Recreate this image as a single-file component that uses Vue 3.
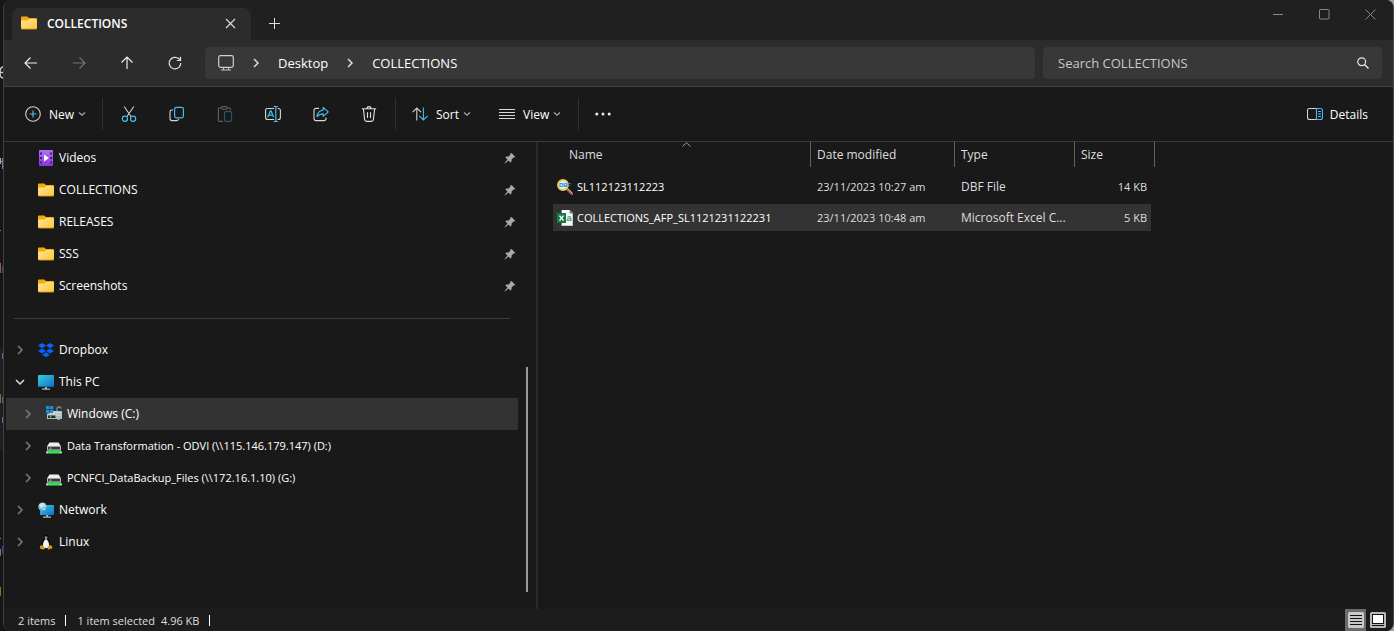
<script setup>
import { ref } from 'vue'

const search = ref('')

const pinned = [
  { name: 'Videos', icon: 'i-videos' },
  { name: 'COLLECTIONS', icon: 'i-folder' },
  { name: 'RELEASES', icon: 'i-folder' },
  { name: 'SSS', icon: 'i-folder' },
  { name: 'Screenshots', icon: 'i-folder' }
]

const places = [
  { name: 'Dropbox', icon: 'i-dropbox' },
  { name: 'This PC', icon: 'i-pc', open: true },
  { name: 'Windows (C:)', icon: 'i-windrive', child: true, selected: true },
  { name: 'Data Transformation - ODVI (\\\\115.146.179.147) (D:)', icon: 'i-netdrive', child: true, remote: true },
  { name: 'PCNFCI_DataBackup_Files (\\\\172.16.1.10) (G:)', icon: 'i-netdrive', child: true, remote: true },
  { name: 'Network', icon: 'i-network' },
  { name: 'Linux', icon: 'i-linux' }
]

const tools = [
  { label: 'Cut', icon: 'i-cut' },
  { label: 'Copy', icon: 'i-copy' },
  { label: 'Paste', icon: 'i-paste', disabled: true },
  { label: 'Rename', icon: 'i-rename' },
  { label: 'Share', icon: 'i-share' },
  { label: 'Delete', icon: 'i-delete' }
]

const columns = [
  { label: 'Name', cls: 'c-name', sorted: true },
  { label: 'Date modified', cls: 'c-date' },
  { label: 'Type', cls: 'c-type' },
  { label: 'Size', cls: 'c-size' }
]

const files = [
  { name: 'SL112123112223', date: '23/11/2023 10:27 am', type: 'DBF File', size: '14 KB', icon: 'i-dbf' },
  { name: 'COLLECTIONS_AFP_SL1121231122231', date: '23/11/2023 10:48 am', type: 'Microsoft Excel C...', size: '5 KB', icon: 'i-excel', selected: true }
]
</script>

<template>
  <div class="desktop">
    <svg class="symbols" aria-hidden="true">
      <defs>
        <linearGradient id="g-folder" x1="0" y1="0" x2="1" y2="1">
          <stop offset="0" stop-color="#ffe79b" /><stop offset="1" stop-color="#fcc535" />
        </linearGradient>
        <linearGradient id="g-video" x1="0" y1="0" x2="0" y2="1">
          <stop offset="0" stop-color="#b272f0" /><stop offset="1" stop-color="#8638d8" />
        </linearGradient>
        <linearGradient id="g-screen" x1="0" y1="0" x2="1" y2="1">
          <stop offset="0" stop-color="#35d0e0" /><stop offset="1" stop-color="#0f6fc4" />
        </linearGradient>
        <radialGradient id="g-globe" cx="0.4" cy="0.3" r="0.8">
          <stop offset="0" stop-color="#d6f1fb" /><stop offset="1" stop-color="#2d8bc0" />
        </radialGradient>

        <symbol id="i-folder" viewBox="0 0 16 16">
          <path d="M0 2.5Q0 1.5 1 1.5H6.2L8 3H15Q16 3 16 4V8H0z" fill="#f6a90c" />
          <path d="M0 5.6H6.4L8.2 4H15Q16 4 16 5V13Q16 14 15 14H1Q0 14 0 13z" fill="url(#g-folder)" />
          <path d="M0 13Q0 14 1 14H15Q16 14 16 13" fill="none" stroke="#e3a21b" stroke-width="0.8" />
        </symbol>
        <symbol id="i-videos" viewBox="0 0 16 16">
          <rect x="1" y="0" width="14" height="16" rx="1" fill="url(#g-video)" />
          <path d="M2 2.5h2v2H2zM2 7h2v2H2zM2 11.5h2v2H2zM12 2.5h2v2h-2zM12 7h2v2h-2zM12 11.5h2v2h-2z" fill="#4a1a82" />
          <path d="M6 4.5v7l5-3.5z" fill="#fff" />
        </symbol>
        <symbol id="i-dropbox" viewBox="0 0 16 16">
          <path d="M4 1l4 2.6-4 2.6-4-2.6zM12 1l4 2.6-4 2.6-4-2.6zM4 6.4L8 9l-4 2.6L0 9zM12 6.4L16 9l-4 2.6L8 9zM8 10.3l4 2.5-4 2.5-4-2.5z" fill="#0a62ff" />
        </symbol>
        <symbol id="i-pc" viewBox="0 0 16 16">
          <rect x="0" y="1" width="16" height="12" rx="0.8" fill="url(#g-screen)" />
          <path d="M0 12.6h16" stroke="#0b5a9a" stroke-width="0.8" />
          <path d="M7 13h2v2H7zM4 14.6h8v1.2H4z" fill="#a8b4bc" />
        </symbol>
        <symbol id="i-windrive" viewBox="0 0 16 16">
          <path d="M3 7.5L5 5H14L16 8V13H1V8z" fill="#dcdcdc" />
          <path d="M1 8.5H16V13H1z" fill="#bdbdbd" />
          <path d="M2 9.5H15V12H2z" fill="#2b2b2b" />
          <circle cx="4.5" cy="10.5" r="0.9" fill="#38d257" />
          <path d="M0 0h3.3v3.3H0zM4 0h3.3v3.3H4zM0 4h3.3v3.3H0zM4 4h3.3v3.3H4z" fill="#1a93dd" />
          <path d="M11 5V3Q11 0.8 13 0.8Q14.8 0.8 15 2.6" fill="none" stroke="#9a9a9a" stroke-width="1.2" />
          <path d="M9.2 5H16V10Q16 12.5 12.6 14Q9.2 12.5 9.2 10z" fill="#a9bccb" />
          <path d="M10 6.5h5.4M10 9h5.4" stroke="#dce6ee" stroke-width="0.8" />
        </symbol>
        <symbol id="i-netdrive" viewBox="0 0 16 16">
          <path d="M3.4 4.6H12.6L15 8.4H1z" fill="#efefef" />
          <path d="M1 8H15V12.4H1z" fill="#b8b8b8" />
          <path d="M2 8.8H14V11.4H2z" fill="#3a3a3a" />
          <circle cx="4.5" cy="10.2" r="0.9" fill="#38e35c" />
          <path d="M1 12.2H15V15.6H1z" fill="#3fd75c" />
          <path d="M0 13.4H2V15.2H0zM14 13.4H16V15.2H14z" fill="#bcd9c1" />
        </symbol>
        <symbol id="i-network" viewBox="0 0 16 16">
          <rect x="2" y="3" width="14" height="10" rx="0.6" fill="url(#g-screen)" />
          <path d="M8.2 13h2v2h-2zM5 14.6h8v1.2H5z" fill="#a8b4bc" />
          <circle cx="4.6" cy="4.8" r="4.4" fill="url(#g-globe)" />
          <path d="M2 2.8Q4 4.6 3.2 6.2M5.4 1.2Q5 3.6 8 4.8M4.6 8.2Q5 6.2 7.6 7" fill="none" stroke="#f4fcff" stroke-width="0.9" />
        </symbol>
        <symbol id="i-linux" viewBox="0 0 16 16">
          <path d="M8 0.3Q5.4 0.3 5.5 3.2Q5.6 5.4 4 7.8Q2.4 10.4 3 13.2H13Q13.6 10.4 12 7.8Q10.4 5.4 10.5 3.2Q10.6 0.3 8 0.3z" fill="#070707" stroke="#333" stroke-width="0.3" />
          <path d="M8 5Q6 6 5.2 9Q4.4 13 6.6 14H9.4Q11.6 13 10.8 9Q10 6 8 5z" fill="#f4f4f4" />
          <path d="M6.8 2.6h0.9v1.3h-0.9zM8.4 2.6h0.9v1.3h-0.9z" fill="#ddd" />
          <path d="M6.5 4.4Q8 3.4 9.5 4.4L8 5.6z" fill="#e7a521" />
          <path d="M2 12.2L4 10.8L7 14.2Q6.2 15.8 4.8 15.4L1.8 14.6zM14 12.2L12 10.8L9.4 13.6Q9.4 15.8 11 15.4L14.4 14.2z" fill="#d49a1c" />
        </symbol>
        <symbol id="i-dbf" viewBox="0 0 16 16">
          <path d="M9.8 9.8L14.8 14.8" stroke="#9a5a4b" stroke-width="2.8" stroke-linecap="round" />
          <path d="M10.8 9.8L15.2 14.2" stroke="#e4c0b4" stroke-width="1" />
          <circle cx="6" cy="6" r="5.1" fill="#d8f0fc" stroke="#eccb4f" stroke-width="1.7" />
          <text x="2" y="8" font-size="6" font-weight="700" font-family="Liberation Sans, sans-serif" fill="#1f7fd0">DBF</text>
        </symbol>
        <symbol id="i-excel" viewBox="0 0 16 16">
          <path d="M4.6 0H12.6L16 3.4V16H4.6z" fill="#f7f7f7" />
          <path d="M12.6 0L16 3.4H12.6z" fill="#7c7c7c" />
          <path d="M4.6 15.6H15.6V3.4" fill="none" stroke="#a0a0a0" stroke-width="0.6" />
          <rect x="0" y="3" width="9" height="10" fill="#137c43" />
          <path d="M2.5 5.6L6.5 10.6M6.5 5.6L2.5 10.6" stroke="#fff" stroke-width="1.4" />
          <text x="9.6" y="10.8" font-size="9" font-weight="700" font-family="Liberation Sans, sans-serif" fill="#2c9f66">a</text>
        </symbol>

        <symbol id="i-pin" viewBox="0 0 12 12">
          <path d="M7.2 0.8L11.2 4.8L10.2 5.6L9.6 5.5L7.6 7.6L7.4 9.8L6.4 10.6L4.4 8.6L1 11.4L0.6 11L3.4 7.6L1.4 5.6L2.3 4.6L4.5 4.4L6.5 2.4L6.4 1.6z" fill="#a3abb2" />
        </symbol>

        <symbol id="i-cut" viewBox="0 0 16 16">
          <path d="M3.2 0.5L10.2 10.8M12.8 0.5L5.8 10.8" fill="none" stroke="#d0d0d0" stroke-width="1.1" />
          <circle cx="3.9" cy="12.7" r="2.6" fill="none" stroke="#4cb8ee" stroke-width="1.2" />
          <circle cx="12.1" cy="12.7" r="2.6" fill="none" stroke="#4cb8ee" stroke-width="1.2" />
        </symbol>
        <symbol id="i-copy" viewBox="0 0 16 16">
          <path d="M4 4H2.8Q1 4 1 5.8V12.6Q1 14.6 3 14.6H7.6Q9.4 14.6 9.6 13" fill="none" stroke="#d6d6d6" stroke-width="1.1" />
          <rect x="5.6" y="1.4" width="8.8" height="10.4" rx="1.8" fill="none" stroke="#4cb8ee" stroke-width="1.2" />
        </symbol>
        <symbol id="i-paste" viewBox="0 0 16 16">
          <path d="M4.5 2H2.4Q1.4 2 1.4 3V14.4Q1.4 15.4 2.4 15.4H6M10 2h2.4Q13.4 2 13.4 3V4.5" fill="none" stroke="#606060" stroke-width="1.1" />
          <rect x="4.6" y="0.6" width="5.6" height="2.6" rx="1.2" fill="none" stroke="#606060" stroke-width="1.1" />
          <rect x="7.6" y="5.6" width="7" height="9.8" rx="1.2" fill="none" stroke="#285670" stroke-width="1.1" />
        </symbol>
        <symbol id="i-rename" viewBox="0 0 16 16">
          <path d="M9.2 2.5H2.6Q0.6 2.5 0.6 4.5V11.5Q0.6 13.5 2.6 13.5H9.2M12.6 2.5H13.4Q15.4 2.5 15.4 4.5V11.5Q15.4 13.5 13.4 13.5H12.6" fill="none" stroke="#d6d6d6" stroke-width="1.1" />
          <path d="M8.6 0.5H13M8.6 15.5H13M10.8 0.5V15.5" fill="none" stroke="#4cb8ee" stroke-width="1.2" />
          <path d="M2.8 11.2L5.4 4.8H6L8.6 11.2M3.6 9.2H7.8" fill="none" stroke="#4cb8ee" stroke-width="1.3" />
        </symbol>
        <symbol id="i-share" viewBox="0 0 16 16">
          <path d="M6 2.4H3.2Q1 2.4 1 4.6V12.4Q1 14.6 3.2 14.6H10.8Q13 14.6 13 12.4V11.4" fill="none" stroke="#d6d6d6" stroke-width="1.1" />
          <path d="M10.2 1.4L15.2 5.9L10.2 10.4V7.8Q6.4 7.6 4 10.6Q4.6 4.8 10.2 4.1z" fill="none" stroke="#4cb8ee" stroke-width="1.2" stroke-linejoin="round" />
        </symbol>
        <symbol id="i-delete" viewBox="0 0 16 16">
          <path d="M0.8 2.8H15.2M5.8 2.6Q6 0.6 8 0.6Q10 0.6 10.2 2.6M2.4 3L3.6 13.4Q3.8 15.4 5.8 15.4H10.2Q12.2 15.4 12.4 13.4L13.6 3M6.5 6.2V12M9.5 6.2V12" fill="none" stroke="#e0e0e0" stroke-width="1.1" />
        </symbol>
        <symbol id="i-chevdown" viewBox="0 0 8 8">
          <path d="M1 2.5L4 5.3L7 2.5" fill="none" stroke="#a8a8a8" stroke-width="1.2" />
        </symbol>
        <symbol id="i-chevright" viewBox="0 0 10 10">
          <path d="M3 1L7 5L3 9" fill="none" stroke="currentColor" stroke-width="1.5" />
        </symbol>
      </defs>
    </svg>

    <svg class="behind" viewBox="0 0 3 631" width="3" height="631" aria-hidden="true">
      <path d="M0 348h3v103H0z" fill="#202020" />
      <path d="M3 67Q0 67 0 72.500T3 78M0 72.500H3" fill="none" stroke="#c8c8c8" stroke-width="1.500" />
      <path d="M0 158h1v6H0zM0 161h2v1H0z" fill="#b9aa98" />
      <path d="M2 158h1v11H2z" fill="#5a8bb8" />
      <path d="M0 230h1v1H0zM0 538h1v1H0z" fill="#b08950" />
      <path d="M0 263h1v10H0zM0 394h1v9H0zM0 587h1v9H0z" fill="#9d651d" />
      <path d="M2 266h1v7H2zM2 546h1v8H2z" fill="#343bd0" />
      <path d="M2 353h1v6H2zM2 397h1v6H2zM2 417h1v6H2z" fill="#3975a7" />
      <path d="M0 549h1v7H0z" fill="#8f713e" />
    </svg>

    <main class="window">
      <header class="titlebar">
        <div class="tab">
          <svg class="ico"><use href="#i-folder" /></svg>
          <span class="tab-title">COLLECTIONS</span>
          <button class="tab-close" aria-label="Close tab">
            <svg width="11" height="11" viewBox="0 0 11 11"><path d="M1 1L10 10M10 1L1 10" stroke="#ddd" stroke-width="1.100" /></svg>
          </button>
        </div>
        <button class="new-tab" aria-label="New tab">
          <svg width="11" height="11" viewBox="0 0 11 11"><path d="M0 5.500H11M5.500 0V11" stroke="#ddd" /></svg>
        </button>
        <div class="caption">
          <button aria-label="Minimize"><svg width="11" height="11" viewBox="0 0 11 11"><path d="M0 5.500H10" stroke="#888" /></svg></button>
          <button aria-label="Maximize"><svg width="11" height="11" viewBox="0 0 11 11"><rect x="0.500" y="0.500" width="9.500" height="9.500" rx="0.800" fill="none" stroke="#888" /></svg></button>
          <button aria-label="Close"><svg width="11" height="11" viewBox="0 0 11 11"><path d="M0.500 0.500L10.500 10.500M10.500 0.500L0.500 10.500" stroke="#888" /></svg></button>
        </div>
      </header>

      <nav class="navbar" aria-label="Navigation">
        <div class="nav-buttons">
          <button aria-label="Back"><svg width="14" height="14" viewBox="0 0 14 14"><path d="M13 7H1.500M6.500 1.500L1 7L6.500 12.500" fill="none" stroke="#eee" stroke-width="1.200" /></svg></button>
          <button aria-label="Forward" disabled><svg width="14" height="14" viewBox="0 0 14 14"><path d="M1 7H12.500M7.500 1.500L13 7L7.500 12.500" fill="none" stroke="#707070" stroke-width="1.200" /></svg></button>
          <button aria-label="Up"><svg width="14" height="14" viewBox="0 0 14 14"><path d="M7 13V1.500M1.500 6.500L7 1L12.500 6.500" fill="none" stroke="#eee" stroke-width="1.200" /></svg></button>
          <button aria-label="Refresh"><svg width="14" height="14" viewBox="0 0 14 14"><path d="M12.800 7A5.800 5.800 0 1 1 10.900 2.800L12.400 4.200M12.500 0.800V4.500H8.800" fill="none" stroke="#e0e0e0" stroke-width="1.200" /></svg></button>
        </div>
        <div class="address">
          <svg class="monitor" width="16" height="16" viewBox="0 0 16 16"><rect x="0.700" y="0.700" width="14.600" height="11.600" rx="1.800" fill="none" stroke="#d0d0d0" stroke-width="1.200" /><path d="M5.500 12.500V15M10.500 12.500V15M3 15H13" fill="none" stroke="#c0c0c0" stroke-width="1.200" /></svg>
          <svg class="crumb-sep"><use href="#i-chevright" /></svg>
          <button class="crumb">Desktop</button>
          <svg class="crumb-sep"><use href="#i-chevright" /></svg>
          <button class="crumb">COLLECTIONS</button>
        </div>
        <label class="search">
          <input v-model="search" type="text" placeholder="Search COLLECTIONS" aria-label="Search COLLECTIONS" />
          <svg width="12" height="12" viewBox="0 0 12 12"><circle cx="4.700" cy="4.700" r="3.900" fill="none" stroke="#e4e4e4" stroke-width="1.200" /><path d="M7.500 7.500L11.500 11.500" stroke="#e4e4e4" stroke-width="1.400" /></svg>
        </label>
      </nav>

      <div class="commands" role="toolbar" aria-label="Commands">
        <button class="cmd new">
          <svg class="ico" viewBox="0 0 16 16"><circle cx="8" cy="8" r="7.300" fill="none" stroke="#d0d0d0" stroke-width="1.100" /><path d="M4.500 8H11.500M8 4.500V11.500" stroke="#4cb8ee" stroke-width="1.200" /></svg>
          <span>New</span>
          <svg class="chev"><use href="#i-chevdown" /></svg>
        </button>
        <div class="tools">
          <button v-for="t in tools" :key="t.label" class="tool" :aria-label="t.label" :disabled="t.disabled">
            <svg class="ico"><use :href="'#' + t.icon" /></svg>
          </button>
        </div>
        <div class="arrange">
          <button class="cmd">
            <svg class="ico" viewBox="0 0 16 16"><path d="M4.800 14.500V2M0.600 6.200L4.800 2L9 6.200" fill="none" stroke="#d0d0d0" stroke-width="1.100" /><path d="M11.400 1.500V14M7.200 9.800L11.400 14L15.600 9.800" fill="none" stroke="#4cb8ee" stroke-width="1.100" /></svg>
            <span>Sort</span>
            <svg class="chev"><use href="#i-chevdown" /></svg>
          </button>
          <button class="cmd">
            <svg class="ico" viewBox="0 0 16 16"><path d="M0 3.500H16M0 6.500H16M0 9.500H16M0 12.500H16" stroke="#d8d8d8" /></svg>
            <span>View</span>
            <svg class="chev"><use href="#i-chevdown" /></svg>
          </button>
        </div>
        <button class="tool" aria-label="See more">
          <svg class="ico" viewBox="0 0 16 16"><circle cx="1.800" cy="8" r="1.500" fill="#eee" /><circle cx="8" cy="8" r="1.500" fill="#eee" /><circle cx="14.200" cy="8" r="1.500" fill="#eee" /></svg>
        </button>
        <button class="cmd details">
          <svg class="ico" viewBox="0 0 16 16"><path d="M9.500 2.500H2.500Q0.500 2.500 0.500 4.500V11.500Q0.500 13.500 2.500 13.500H9.500" fill="none" stroke="#d6d6d6" stroke-width="1.100" /><path d="M9.500 2.500H13.500Q15.500 2.500 15.500 4.500V11.500Q15.500 13.500 13.500 13.500H9.500zM11 5.500H14M11 8H14M11 10.500H14" fill="none" stroke="#4cb8ee" stroke-width="1.100" /></svg>
          <span>Details</span>
        </button>
      </div>

      <div class="body">
        <aside class="sidebar">
          <div class="tree">
            <a v-for="p in pinned" :key="p.name" href="#" class="row">
              <span class="twist"></span>
              <svg class="ico"><use :href="'#' + p.icon" /></svg>
              <span class="label">{{ p.name }}</span>
              <svg class="pin"><use href="#i-pin" /></svg>
            </a>
            <hr class="divider" />
            <a v-for="p in places" :key="p.name" href="#" class="row" :class="{ child: p.child, selected: p.selected, open: p.open, remote: p.remote }">
              <span class="twist"><svg class="arrow"><use href="#i-chevright" /></svg></span>
              <svg class="ico"><use :href="'#' + p.icon" /></svg>
              <span class="label">{{ p.name }}</span>
            </a>
          </div>
          <div class="scroll"><div class="thumb"></div></div>
        </aside>

        <section class="list">
          <table>
            <thead>
              <tr>
                <th v-for="c in columns" :key="c.label" :class="c.cls" :aria-sort="c.sorted ? 'ascending' : undefined">
                  <button class="head">
                    {{ c.label }}
                    <svg v-if="c.sorted" class="caret" width="9" height="5" viewBox="0 0 9 5"><path d="M0.500 4.500L4.500 0.700L8.500 4.500" fill="none" stroke="#a0a0a0" /></svg>
                  </button>
                </th>
              </tr>
            </thead>
            <tbody>
              <tr v-for="f in files" :key="f.name" :class="{ selected: f.selected }">
                <td class="c-name">
                  <div class="file"><svg class="ico"><use :href="'#' + f.icon" /></svg><span>{{ f.name }}</span></div>
                </td>
                <td>{{ f.date }}</td>
                <td class="c-type">{{ f.type }}</td>
                <td class="c-size">{{ f.size }}</td>
              </tr>
            </tbody>
          </table>
        </section>
      </div>

      <footer class="status">
        <span class="count">2 items</span>
        <span class="selection"><span>1 item selected</span><span>4.96 KB</span></span>
        <div class="views">
          <button class="view on" aria-label="Details view">
            <svg width="16" height="16" viewBox="0 0 16 16"><rect width="16" height="16" rx="1.500" fill="#c8c8c8" /><path d="M2 3.500H14M2 6.500H14M2 9.500H14M2 12.500H14" stroke="#111" /></svg>
          </button>
          <button class="view" aria-label="Large icons view">
            <svg width="16" height="16" viewBox="0 0 16 16"><rect width="16" height="16" rx="1.500" fill="#b8b8b8" /><rect x="2.500" y="2.500" width="11" height="9" fill="#fff" stroke="#111" /><path d="M2 13.500H14" stroke="#111" /></svg>
          </button>
        </div>
      </footer>
    </main>
  </div>
</template>

<style>
body {
  background: #161616;
}
</style>

<style scoped>
.desktop {
  display: grid;
  grid-template-columns: 3px minmax(0, 1fr);
  min-height: 100vh;
  background: linear-gradient(90deg, #161616 50%, #a0a0a0 50%);
  font-family: "Open Sans", "Noto Sans", sans-serif;
  font-size: 12px;
  line-height: 16px;
  color: #fff;
}
.symbols {
  position: absolute;
  width: 0;
  height: 0;
}
.behind {
  display: block;
}
.window {
  display: flex;
  flex-direction: column;
  min-width: 0;
  border-left: 1px solid #404040;
  border-right: 1px solid #4a4a4a;
  border-radius: 8px;
  background: #191919;
  overflow: hidden;
}
button {
  display: flex;
  align-items: center;
  justify-content: center;
  padding: 0;
  border: 0;
  background: none;
  color: inherit;
  font: inherit;
}
svg {
  flex: none;
}
.ico {
  width: 16px;
  height: 16px;
}

.titlebar {
  display: flex;
  height: 40px;
  background: #202020;
}
.tab {
  display: flex;
  align-items: center;
  box-sizing: border-box;
  width: 239px;
  margin: 8px 0 0 8px;
  padding: 0 10px 2px 9px;
  border-radius: 8px 8px 0 0;
  background: #2c2c2c;
}
.tab-title {
  flex: 1;
  margin-left: 10px;
  padding-top: 2px;
  font-weight: 600;
}
.tab-close {
  width: 22px;
  height: 24px;
}
.new-tab {
  width: 46px;
  padding-top: 7px;
}
.caption {
  display: flex;
  margin-left: auto;
}
.caption button {
  width: 46px;
  height: 28px;
}

.navbar {
  display: flex;
  align-items: center;
  gap: 8px;
  box-sizing: border-box;
  height: 47px;
  padding-right: 11px;
  border-bottom: 1px solid #404040;
  background: #2c2c2c;
  font-size: 13px;
  line-height: 20px;
}
.nav-buttons {
  display: flex;
  gap: 16px;
  padding: 0 6px 0 11px;
}
.nav-buttons button {
  width: 32px;
  height: 32px;
}
.address,
.search {
  display: flex;
  align-items: center;
  height: 32px;
  border-radius: 4px;
  background: #383838;
}
.address {
  flex: 1;
  min-width: 0;
}
.monitor {
  margin-left: 13px;
}
.crumb-sep {
  width: 10px;
  height: 10px;
  margin: 0 17px;
  color: #ddd;
}
.search {
  width: 339px;
  box-sizing: border-box;
  padding: 0 13px 0 15px;
}
.search input {
  flex: 1;
  min-width: 0;
  padding: 0;
  border: 0;
  outline: 0;
  background: none;
  color: #fff;
  font: inherit;
}
.search input::placeholder {
  color: #c8c8c8;
  opacity: 1;
}

.commands {
  display: flex;
  align-items: center;
  box-sizing: border-box;
  height: 55px;
  padding: 0 25px 0 21px;
  border-bottom: 1px solid #3a3a3a;
}
.cmd {
  height: 32px;
}
.cmd span {
  margin: 0 4px 0 8px;
  padding-top: 2px;
}
.chev {
  width: 8px;
  height: 8px;
}
.new {
  width: 61px;
}
.tools,
.arrange {
  display: flex;
  align-items: center;
  height: 32px;
  border-right: 1px solid #303030;
}
.tools {
  margin-left: 16px;
  padding: 0 2px;
  border-left: 1px solid #303030;
}
.tool {
  width: 48px;
  height: 32px;
}
.arrange {
  gap: 28px;
  padding: 0 17px 0 16px;
}
.details {
  margin-left: auto;
}
.details span {
  margin: 0 0 0 7px;
}

.body {
  display: flex;
  flex: 1;
  min-height: 0;
}
.sidebar {
  display: flex;
  flex: none;
  width: 532px;
  border-right: 2px solid #2a2a2a;
}
.tree {
  flex: 1;
  margin-left: 2px;
}
.row {
  display: flex;
  align-items: center;
  height: 32px;
  color: #fff;
  text-decoration: none;
}
.row.selected {
  background: #333;
}
.row.remote {
  font-size: 11px;
}
.twist {
  display: flex;
  width: 32px;
}
.child .twist {
  width: 40px;
}
.arrow {
  width: 10px;
  height: 10px;
  margin-left: 9px;
  color: #7c7c7c;
}
.child .arrow {
  margin-left: 17px;
}
.open .arrow {
  color: #ddd;
  transform: rotate(90deg);
}
.label {
  flex: 1;
  margin-left: 5px;
  white-space: nowrap;
}
.pin {
  width: 12px;
  height: 12px;
  margin-right: 2px;
}
.divider {
  height: 1px;
  margin: 16px 8px 15px;
  border: 0;
  background: #3c3c3c;
}
.scroll {
  display: flex;
  align-items: flex-end;
  width: 18px;
  box-sizing: border-box;
  padding: 0 0 17px 8px;
}
.thumb {
  width: 2px;
  height: 225px;
  background: #9a9a9a;
}

.list {
  flex: 1;
  min-width: 0;
  padding-left: 15px;
}
table {
  width: 602px;
  border-spacing: 0;
  table-layout: fixed;
}
th {
  height: 29px;
  padding: 0;
  vertical-align: top;
  font-weight: 400;
  color: #dedede;
}
th.c-name {
  width: 258px;
}
th.c-date {
  width: 144px;
}
th.c-type {
  width: 120px;
}
.head {
  position: relative;
  justify-content: flex-start;
  box-sizing: border-box;
  width: 100%;
  height: 25px;
  padding-left: 6px;
  border-right: 1px solid #636363;
}
th.c-name .head {
  padding-left: 16px;
}
.caret {
  position: absolute;
  top: 0;
  left: 129px;
}
td {
  height: 27px;
  padding: 0 0 0 6px;
  border: solid transparent;
  border-width: 2px 0;
  background-clip: padding-box;
  color: #dedede;
  font-size: 11px;
  white-space: nowrap;
}
td.c-name {
  padding-left: 4px;
  color: #fff;
}
td.c-type {
  font-size: 12px;
}
td.c-size {
  padding-right: 4px;
  border-right-width: 4px;
  text-align: right;
}
tr.selected td {
  background-color: #333;
}
.file {
  display: flex;
  align-items: center;
  gap: 4px;
}

.status {
  display: flex;
  align-items: center;
  height: 22px;
  padding-left: 14px;
  background: #1c1c1c;
  color: #dedede;
  font-size: 11px;
}
.status > span {
  display: flex;
  gap: 6px;
  padding-right: 10px;
  margin-right: 11px;
  line-height: 11px;
  border-right: 1px solid #fff;
}
.views {
  display: flex;
  gap: 1px;
  margin-left: auto;
  padding-right: 5px;
}
.view {
  width: 21px;
  height: 22px;
}
.view.on {
  background: #6b6b6b;
}
</style>
